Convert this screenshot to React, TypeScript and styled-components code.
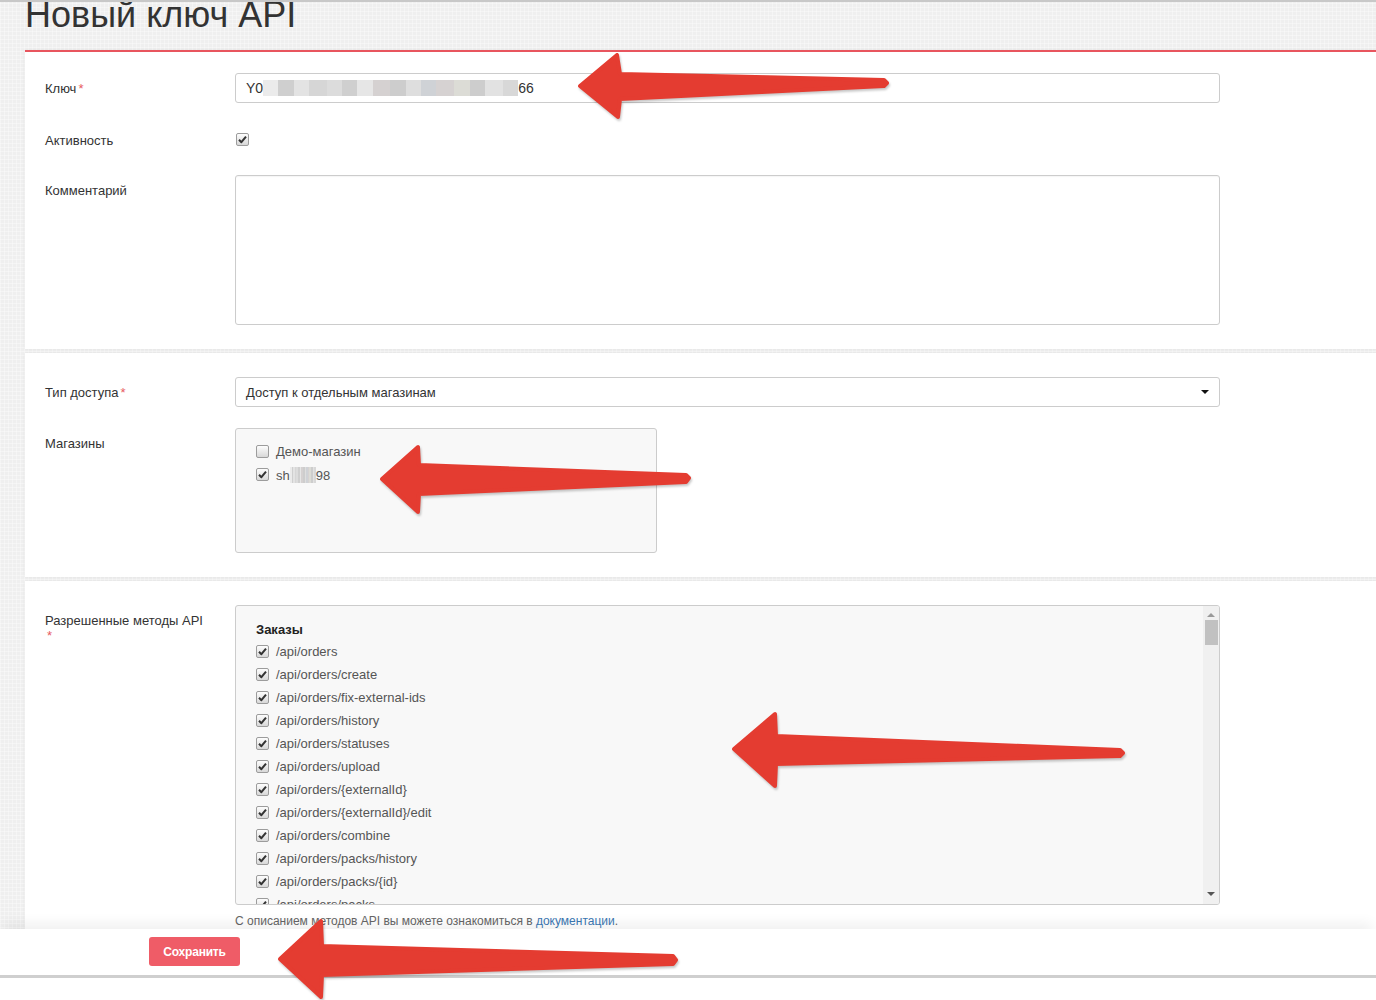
import styled, { createGlobalStyle } from "styled-components";

const GlobalStyle = createGlobalStyle`
  html, body {
    margin: 0;
    padding: 0;
  }
  body {
    font-family: "Liberation Sans", Arial, sans-serif;
    color: #333;
    background-color: #efefef;
    background-image:
      repeating-linear-gradient(0deg, rgba(255,255,255,0.35) 0 1px, transparent 1px 4px),
      repeating-linear-gradient(90deg, rgba(255,255,255,0.35) 0 1px, transparent 1px 4px);
  }
`;

const StyledPage = styled.div`
  position: relative;
  width: 1376px;
  height: 1000px;
  overflow: hidden;
  border-top: 2px solid #c8c8c8;
  box-sizing: border-box;
  display: flex;
  flex-direction: column;
`;

const StyledTitle = styled.h1`
  margin: -5px 0 17px 25px;
  font-size: 36px;
  line-height: 36px;
  font-weight: normal;
  color: #333;
`;

const StyledPanel = styled.section<{ $accent?: boolean; $last?: boolean }>`
  margin: 0 0 4px 25px;
  background: #fff;
  border-top: ${(p) => (p.$accent ? "2px solid #e8555e" : "none")};
  padding: ${(p) => (p.$accent ? "21px" : "24px")} 20px ${(p) => (p.$last ? "0" : "24px")};
  box-shadow: 0 0 3px rgba(0, 0, 0, 0.07);
  ${(p) => p.$last && "margin-bottom: 0;"}
`;

const StyledRow = styled.div<{ $gap?: number }>`
  display: grid;
  grid-template-columns: 190px 985px;
  align-items: start;
  margin-bottom: ${(p) => p.$gap ?? 0}px;
`;

const StyledLabel = styled.label<{ $top?: number }>`
  width: 165px;
  padding-top: ${(p) => p.$top ?? 8}px;
  font-size: 13px;
  line-height: 15px;
  color: #333;
`;

const StyledRequired = styled.span`
  color: #e75a62;
  margin-left: 2px;
`;

const StyledInputBox = styled.div`
  display: flex;
  align-items: center;
  height: 30px;
  box-sizing: border-box;
  padding: 0 10px;
  border: 1px solid #ccc;
  border-radius: 3px;
  background: #fff;
  font-size: 14px;
  color: #333;
`;

const StyledBlur = styled.span<{ $w: number }>`
  display: inline-block;
  width: ${(p) => p.$w}px;
  height: 16px;
  background: linear-gradient(
    90deg,
    #ebebeb 0 6%,
    #cfcfcf 6% 12%,
    #e3e3e3 12% 18%,
    #d6d6d6 18% 25%,
    #dcdcdc 25% 31%,
    #cfcfcf 31% 37%,
    #e6e6e6 37% 43%,
    #d5d1d1 43% 50%,
    #cdcdcd 50% 56%,
    #dedede 56% 62%,
    #cfd2d6 62% 68%,
    #d6d2d2 68% 75%,
    #dcdcd6 75% 81%,
    #cdcdcd 81% 87%,
    #e2e2e2 87% 94%,
    #d8d8d8 94% 100%
  );
`;

const StyledTextarea = styled.div`
  height: 150px;
  box-sizing: border-box;
  border: 1px solid #ccc;
  border-radius: 3px;
  background: #fff;
  box-shadow: inset 0 1px 1px rgba(0, 0, 0, 0.04);
`;

const StyledSelect = styled(StyledInputBox)`
  justify-content: space-between;
  font-size: 13px;
  padding-right: 10px;
`;

const StyledCheckCell = styled.div`
  display: flex;
  padding: 7px 0 0 1px;
`;

const StyledBox = styled.div<{ $w?: number; $h: number }>`
  width: ${(p) => (p.$w ? `${p.$w}px` : "auto")};
  height: ${(p) => p.$h}px;
  box-sizing: border-box;
  border: 1px solid #ccc;
  border-radius: 3px;
  background: #f8f8f8;
  display: flex;
  overflow: hidden;
`;

const StyledList = styled.div<{ $top: number }>`
  flex: 1;
  padding: ${(p) => p.$top}px 20px 0;
`;

const StyledGroupTitle = styled.div`
  font-size: 13px;
  font-weight: bold;
  line-height: 16px;
  color: #222;
  margin-bottom: 2px;
`;

const StyledOption = styled.div`
  display: flex;
  align-items: center;
  gap: 7px;
  height: 23px;
  font-size: 13px;
  color: #555;
`;

const StyledCheckbox = styled.span`
  display: inline-flex;
  align-items: center;
  justify-content: center;
  flex: none;
  width: 13px;
  height: 13px;
  box-sizing: border-box;
  border: 1px solid #9c9c9c;
  border-radius: 2px;
  background: linear-gradient(#fdfdfd, #d8d8d8);
`;

const StyledScrollbar = styled.div`
  width: 16px;
  background: #f0f0f0;
  display: flex;
  flex-direction: column;
  align-items: center;
`;

const StyledScrollArrow = styled.div<{ $down?: boolean }>`
  width: 0;
  height: 0;
  margin: ${(p) => (p.$down ? "auto 0 8px" : "7px 0 3px")};
  border-left: 4px solid transparent;
  border-right: 4px solid transparent;
  ${(p) => (p.$down ? "border-top: 4px solid #555;" : "border-bottom: 4px solid #999;")}
`;

const StyledThumb = styled.div`
  width: 13px;
  height: 25px;
  background: #c1c1c1;
`;

const StyledHelp = styled.div`
  margin: 8px 0 0 190px;
  font-size: 12px;
  line-height: 16px;
  color: #666;

  a {
    color: #3b78b3;
    text-decoration: none;
  }
`;

const StyledFooter = styled.footer`
  position: relative;
  height: 46px;
  flex: none;
  background: #fff;
  border-bottom: 3px solid #cfcfcf;
  padding-left: 149px;
  display: flex;
  align-items: flex-start;
  box-shadow: 0 -10px 12px -4px rgba(0, 0, 0, 0.06);
`;

const StyledBottom = styled.div`
  flex: 1;
  background: #fff;
`;

const StyledSaveBtn = styled.button`
  margin-top: 8px;
  width: 91px;
  height: 29px;
  border: none;
  border-radius: 3px;
  background: #ef5c67;
  color: #fff;
  font-family: "Liberation Sans", Arial, sans-serif;
  font-size: 12px;
  font-weight: bold;
  letter-spacing: -0.2px;
`;

const StyledArrows = styled.svg`
  position: absolute;
  left: 0;
  top: 0;
  pointer-events: none;
  filter: drop-shadow(1px 2px 1px rgba(0, 0, 0, 0.22));
`;

const arrows = [
  "580,84 617,53 620,72 884,78 887,81 884,84 620,97 618,115",
  "382,477 418,445 419,463 686,473 689,476 686,480 419,492 418,510",
  "734,747 775,712 776,734 1120,748 1123,751 1120,754 776,762 775,784",
  "280,957 321,919 322,944 673,954 676,958 673,962 322,973 321,995",
];

const methods = [
  "/api/orders",
  "/api/orders/create",
  "/api/orders/fix-external-ids",
  "/api/orders/history",
  "/api/orders/statuses",
  "/api/orders/upload",
  "/api/orders/{externalId}",
  "/api/orders/{externalId}/edit",
  "/api/orders/combine",
  "/api/orders/packs/history",
  "/api/orders/packs/{id}",
  "/api/orders/packs",
  "/api/orders/packs/create",
];

function Checkbox({ checked }: { checked?: boolean }) {
  return (
    <StyledCheckbox>
      {checked && (
        <svg width="9" height="9" viewBox="0 0 9 9">
          <path d="M1 4.8 L3.4 7.2 L8 1.6" stroke="#333" strokeWidth="2" fill="none" strokeLinejoin="round" />
        </svg>
      )}
    </StyledCheckbox>
  );
}

export default function App() {
  return (
    <>
      <GlobalStyle />
      <StyledPage>
        <StyledTitle>Новый ключ API</StyledTitle>

        <StyledPanel $accent>
          <StyledRow $gap={23}>
            <StyledLabel>
              Ключ<StyledRequired>*</StyledRequired>
            </StyledLabel>
            <StyledInputBox>
              Y0<StyledBlur $w={255} />
              66
            </StyledInputBox>
          </StyledRow>
          <StyledRow $gap={27}>
            <StyledLabel $top={7}>Активность</StyledLabel>
            <StyledCheckCell>
              <Checkbox checked />
            </StyledCheckCell>
          </StyledRow>
          <StyledRow>
            <StyledLabel>Комментарий</StyledLabel>
            <StyledTextarea />
          </StyledRow>
        </StyledPanel>

        <StyledPanel>
          <StyledRow $gap={21}>
            <StyledLabel>
              Тип доступа<StyledRequired>*</StyledRequired>
            </StyledLabel>
            <StyledSelect>
              Доступ к отдельным магазинам
              <svg width="8" height="4" viewBox="0 0 8 4">
                <path d="M0 0 H8 L4 4 Z" fill="#111" />
              </svg>
            </StyledSelect>
          </StyledRow>
          <StyledRow>
            <StyledLabel>Магазины</StyledLabel>
            <StyledBox $w={422} $h={125}>
              <StyledList $top={11}>
                <StyledOption>
                  <Checkbox />
                  Демо-магазин
                </StyledOption>
                <StyledOption>
                  <Checkbox checked />
                  <span>
                    sh<StyledBlur $w={26} style={{ verticalAlign: "-3px" }} />
                    98
                  </span>
                </StyledOption>
              </StyledList>
            </StyledBox>
          </StyledRow>
        </StyledPanel>

        <StyledPanel $last>
          <StyledRow>
            <StyledLabel>
              Разрешенные методы API <StyledRequired>*</StyledRequired>
            </StyledLabel>
            <StyledBox $h={300}>
              <StyledList $top={16}>
                <StyledGroupTitle>Заказы</StyledGroupTitle>
                {methods.map((m) => (
                  <StyledOption key={m}>
                    <Checkbox checked />
                    {m}
                  </StyledOption>
                ))}
              </StyledList>
              <StyledScrollbar>
                <StyledScrollArrow />
                <StyledThumb />
                <StyledScrollArrow $down />
              </StyledScrollbar>
            </StyledBox>
          </StyledRow>
          <StyledHelp>
            С описанием методов API вы можете ознакомиться в <a href="#">документации</a>.
          </StyledHelp>
        </StyledPanel>

        <StyledFooter>
          <StyledSaveBtn>Сохранить</StyledSaveBtn>
        </StyledFooter>
        <StyledBottom />

        <StyledArrows width="1376" height="1000" viewBox="0 0 1376 1000">
          {arrows.map((pts) => (
            <polygon key={pts} points={pts} fill="#e43c31" stroke="#e43c31" strokeWidth="4" strokeLinejoin="round" />
          ))}
        </StyledArrows>
      </StyledPage>
    </>
  );
}
